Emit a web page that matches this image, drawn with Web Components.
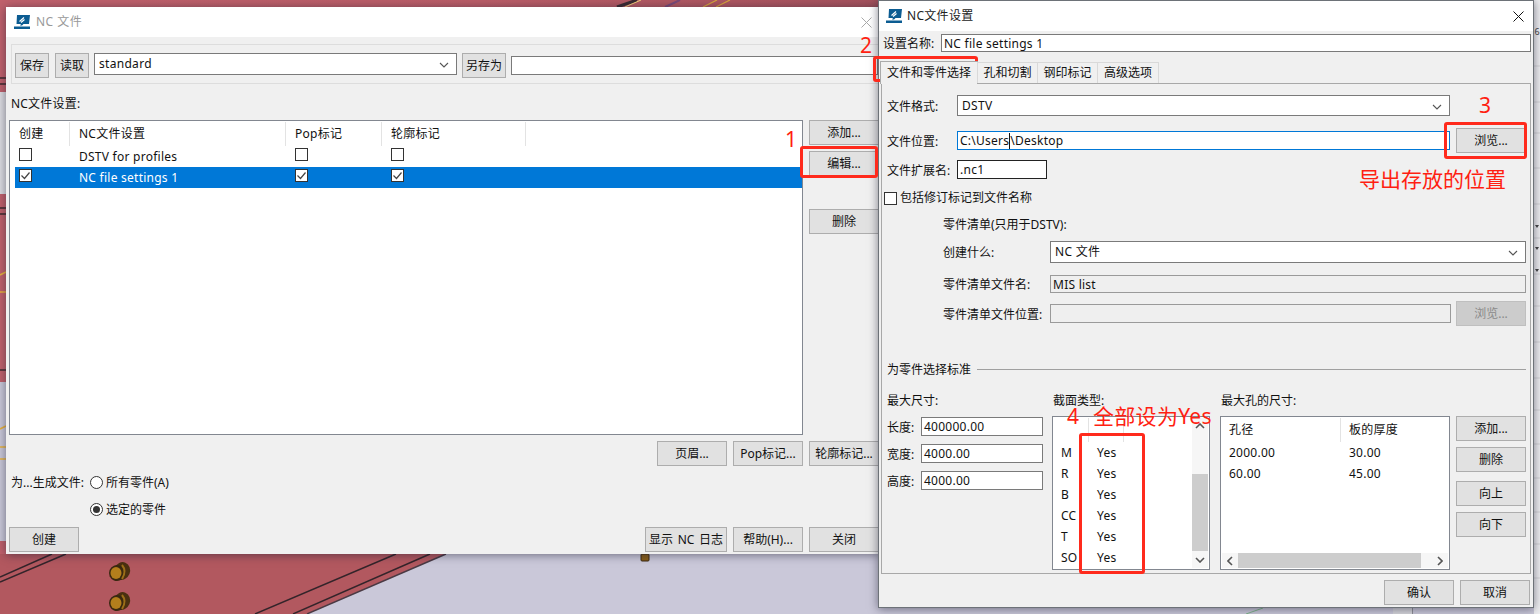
<!DOCTYPE html>
<html lang="zh">
<head>
<meta charset="utf-8">
<title>NC 文件</title>
<style>
    html, body { margin: 0; padding: 0; width: 1540px; height: 614px; overflow: hidden; }
    body { font: 12px/16px "Noto Sans", "Noto Sans CJK SC", sans-serif; color: #111; }
</style>
</head>
<body>
<nc-desktop>
    <nc-file-dialog></nc-file-dialog>
    <nc-settings-dialog></nc-settings-dialog>

    <!-- red marks drawn over the screenshot -->
    <nc-mark style="left:800px;top:146px;width:78px;height:32px"></nc-mark>
    <nc-mark style="left:873px;top:56px;width:105px;height:26px"></nc-mark>
    <nc-mark style="left:1444px;top:122px;width:83px;height:37px"></nc-mark>
    <nc-mark style="left:1079px;top:433px;width:66px;height:141px"></nc-mark>
    <nc-note style="left:785px;top:129px">1</nc-note>
    <nc-note style="left:860px;top:35px">2</nc-note>
    <nc-note style="left:1479px;top:95px">3</nc-note>
    <nc-note style="left:1067px;top:406px">4</nc-note>
    <nc-note style="left:1093px;top:406px;letter-spacing:.3px">全部设为Yes</nc-note>
    <nc-note style="left:1359px;top:169px">导出存放的位置</nc-note>
</nc-desktop>

<script>
// Nền: cảnh CAD phía sau hai cửa sổ
const desktopTemplate = document.createElement('template');
desktopTemplate.innerHTML = `<style>
    :host { display: block; position: relative; width: 1540px; height: 614px; overflow: hidden; background: #cac8d9; }
    svg { display: block; position: absolute; left: 0; top: 0; }
</style>
<svg width="1540" height="614" viewBox="0 0 1540 614">
    <defs>
        <linearGradient id="beam" x1="0" x2="1" y1="0" y2="0">
            <stop offset="0" stop-color="#c0616b"/>
            <stop offset="0.55" stop-color="#bb5d67"/>
            <stop offset="1" stop-color="#a5525c"/>
        </linearGradient>
        <g id="bolt">
            <ellipse cx="3" cy="-1" rx="8" ry="9" fill="#4a3010" transform="rotate(22 3 -1)"/>
            <ellipse cx="-2" cy="1" rx="8" ry="8" fill="#3a2810" transform="rotate(22 -2 1)"/>
            <ellipse cx="-3" cy="1" rx="5.5" ry="6" fill="#b37e1c"/>
            <path d="M3-7q5 6 0 14" fill="none" stroke="#9c6e18" stroke-width="2"/>
        </g>
    </defs>
    <polygon points="0,0 880,0 880,300 307,614 0,614" fill="url(#beam)"/>
    <polygon points="0,554 446,554 307,614 0,614" fill="#b2585f"/>

    <!-- dải bên trái -->
    <rect x="0" y="92" width="6" height="102" fill="#dcdce0"/>
    <rect x="0" y="382" width="6" height="159" fill="#c9c8d8"/>
    <path d="M0 78h6M0 84h6M0 208h6M0 214h6M0 370h6" stroke="#3d2a2e" stroke-width="1.4"/>
    <path d="M0 275l6-3M0 292h6M0 429l6-3M0 447h6M0 459h6" stroke="#e8b23c" stroke-width="1.6"/>

    <!-- dải trên -->
    <path d="M617 7l20-7" stroke="#3a2a30" stroke-width="3"/>
    <path d="M625 7l16-7" stroke="#f1d27a" stroke-width="1"/>
    <path d="M665 7l15-7" stroke="#7a4a78" stroke-width="2"/>
    <path d="M703 7l14-7M716 7l14-7" stroke="#d9a63a" stroke-width="1.2"/>

    <!-- phía dưới -->
    <path d="M0 577l52-23M0 582l66-28M255 614l141-60M293 614l137-60" stroke="#33242a" stroke-width="1.4" fill="none"/>
    <path d="M307 614l139-60" stroke="#4a3a44" stroke-width="1.4" fill="none"/>
    <use href="#bolt" x="119" y="572"/>
    <use href="#bolt" x="119" y="602"/>
    <rect x="641" y="554" width="8" height="7" rx="1" fill="#8a5f18" stroke="#3a2810"/>
    <path d="M1246 614l17-6" stroke="#7fb58a" stroke-width="1"/>
    <rect x="1393" y="608" width="19" height="6" fill="#d5d5da"/>
    <rect x="1412" y="608" width="1" height="6" fill="#8e8e96"/>

    <!-- cửa sổ bên phải -->
    <rect x="1534" y="0" width="6" height="614" fill="#eeeef0"/>
    <path d="M1534 66h6M1534 102h6M1534 133h6M1534 168h6M1534 204h6M1534 238h6M1534 274h6M1534 306h6M1534 342h6M1534 378h6M1534 410h6M1534 444h6M1534 478h6M1534 512h6M1534 544h6M1534 578h6" stroke="#d2d2d6"/>
    <path d="M1535 225h4l-2 3zM1535 247h4l-2 3zM1535 269h4l-2 3z" fill="#444"/>
    <text x="1534.5" y="35" font-size="9" fill="#444" font-family="Noto Sans">6</text>
</svg>
<slot></slot>`;
class NcDesktop extends HTMLElement {
    constructor() {
        super();
        this.attachShadow({ mode: 'open' });
        this.shadowRoot.appendChild(desktopTemplate.content.cloneNode(true));
    }
}

// Cửa sổ: thanh tiêu đề + nội dung
const windowTemplate = document.createElement('template');
windowTemplate.innerHTML = `<style>
    :host { display: flex; flex-direction: column; box-sizing: border-box; background: #f0f0f0; box-shadow: 0 1px 9px rgba(30,30,50,.55); }
    header { flex: none; height: 30px; background: #fff; display: flex; align-items: center; color: #222; letter-spacing: .3px; }
    :host([inactive]) header { color: #999; }
    .icon { margin: 0 5px 0 var(--icon-left, 8px); flex: none; }
    .title { flex: 1; }
    :host([inactive]) .title { margin-left: 1px; letter-spacing: .5px; }
    .close { margin-right: var(--close-right, 10px); flex: none; stroke: #111; }
    :host([inactive]) .close { stroke: #a8a8a8; }
    main { flex: 1; min-height: 0; }
</style>
<header>
    <svg class="icon" width="16" height="14" viewBox="0 0 16 14">
        <path d="M3 0h13l-1 9H9.5L8 10.5H6L7 9H2.5z" fill="#0b5c92"/>
        <path d="M5.5 6.5L10 2.5M7 7.5l3.5-3" stroke="#fff" stroke-width="1.2" fill="none"/>
        <rect x="0" y="11.5" width="16" height="2.5" fill="#0b5c92"/>
    </svg>
    <span class="title"></span>
    <svg class="close" width="11" height="11" viewBox="0 0 11 11"><path d="M.5.5l10 10M10.5.5l-10 10" fill="none"/></svg>
</header>
<main><slot></slot></main>`;
class NcWindow extends HTMLElement {
    constructor() {
        super();
        this.attachShadow({ mode: 'open' });
        this.shadowRoot.appendChild(windowTemplate.content.cloneNode(true));
    }
    connectedCallback() {
        this.shadowRoot.querySelector('.title').textContent = this.getAttribute('heading');
    }
}

const buttonTemplate = document.createElement('template');
buttonTemplate.innerHTML = `<style>
    :host { display: flex; align-items: center; justify-content: center; box-sizing: border-box; flex: none; width: 70px; height: 25px;
        background: #e1e1e1; border: 1px solid #adadad; color: #111; white-space: nowrap; }
    :host([disabled]) { background: #cccccc; border-color: #bfbfbf; color: #8a8a8a; }
</style><slot></slot>`;
class NcButton extends HTMLElement {
    constructor() {
        super();
        this.attachShadow({ mode: 'open' });
        this.shadowRoot.appendChild(buttonTemplate.content.cloneNode(true));
    }
}

const comboTemplate = document.createElement('template');
comboTemplate.innerHTML = `<style>
    :host { display: flex; align-items: center; box-sizing: border-box; flex: none; height: 22px; background: #fff; border: 1px solid #7a7a7a; padding: 0 7px 1px 4px; }
    span { flex: 1; letter-spacing: .3px; }
    svg { flex: none; margin-top: 2px; }
</style><span><slot></slot></span>
<svg width="10" height="6" viewBox="0 0 10 6"><path d="M1 1l4 4 4-4" fill="none" stroke="#555" stroke-width="1.1"/></svg>`;
class NcCombo extends HTMLElement {
    constructor() {
        super();
        this.attachShadow({ mode: 'open' });
        this.shadowRoot.appendChild(comboTemplate.content.cloneNode(true));
    }
}

const fieldTemplate = document.createElement('template');
fieldTemplate.innerHTML = `<style>
    :host { display: flex; align-items: center; box-sizing: border-box; flex: none; height: 19px; background: #fff; border: 1px solid #7a7a7a; padding: 1px 2px 0; white-space: nowrap; overflow: hidden; letter-spacing: .25px; }
    :host([focus]) { border-color: #0078d7; }
    :host([dark]) { border-color: #222; }
    :host([disabled]) { background: #efefef; border-color: #9a9a9a; }
    i { display: inline-block; width: 0; height: 16px; border-left: 1px solid #111; vertical-align: middle; }
</style><span></span>`;
class NcField extends HTMLElement {
    constructor() {
        super();
        this.attachShadow({ mode: 'open' });
        this.shadowRoot.appendChild(fieldTemplate.content.cloneNode(true));
    }
    connectedCallback() {
        const value = this.getAttribute('value') || '';
        const span = this.shadowRoot.querySelector('span');
        if (this.hasAttribute('caret')) {
            const at = +this.getAttribute('caret');
            span.append(value.slice(0, at), document.createElement('i'), value.slice(at));
        } else {
            span.textContent = value;
        }
    }
}

const checkTemplate = document.createElement('template');
checkTemplate.innerHTML = `<style>
    :host { display: inline-flex; align-items: center; gap: 3px; white-space: nowrap; }
    svg { flex: none; display: block; }
</style>
<svg width="13" height="13" viewBox="0 0 13 13">
    <rect x=".5" y=".5" width="12" height="12" fill="#fff" stroke="#333"/>
    <path class="tick" d="M2.5 6.5l3 3 5-6" fill="none" stroke="#444" stroke-width="1.2"/>
</svg><slot></slot>`;
class NcCheck extends HTMLElement {
    constructor() {
        super();
        this.attachShadow({ mode: 'open' });
        this.shadowRoot.appendChild(checkTemplate.content.cloneNode(true));
    }
    connectedCallback() {
        if (!this.hasAttribute('checked')) this.shadowRoot.querySelector('.tick').remove();
    }
}

const radioTemplate = document.createElement('template');
radioTemplate.innerHTML = `<style>
    :host { display: inline-flex; align-items: center; gap: 3px; white-space: nowrap; }
    svg { flex: none; display: block; }
</style>
<svg width="13" height="13" viewBox="0 0 13 13">
    <circle cx="6.5" cy="6.5" r="6" fill="#fff" stroke="#333"/>
    <circle class="dot" cx="6.5" cy="6.5" r="3.5" fill="#333"/>
</svg><slot></slot>`;
class NcRadio extends HTMLElement {
    constructor() {
        super();
        this.attachShadow({ mode: 'open' });
        this.shadowRoot.appendChild(radioTemplate.content.cloneNode(true));
    }
    connectedCallback() {
        if (!this.hasAttribute('checked')) this.shadowRoot.querySelector('.dot').remove();
    }
}

// Thanh cuộn: orient="v" hoặc "h", thumb="đầu,dài"
const scrollTemplate = document.createElement('template');
scrollTemplate.innerHTML = `<style>
    :host { display: block; position: relative; flex: none; background: #f6f6f6; }
    :host([orient="v"]) { width: 16px; }
    :host([orient="h"]) { height: 15px; }
    .thumb { position: absolute; background: #cdcdcd; }
    svg { position: absolute; }
</style><div class="thumb"></div>`;
class NcScroll extends HTMLElement {
    constructor() {
        super();
        this.attachShadow({ mode: 'open' });
        this.shadowRoot.appendChild(scrollTemplate.content.cloneNode(true));
    }
    connectedCallback() {
        const [start, length] = this.getAttribute('thumb').split(',');
        const thumb = this.shadowRoot.querySelector('.thumb');
        const vertical = this.getAttribute('orient') === 'v';
        const paths = vertical ? ['M1 5l4-4 4 4', 'M1 1l4 4 4-4'] : ['M5 1L1 5l4 4', 'M1 1l4 4-4 4'];
        if (vertical) {
            thumb.style.cssText = `left:0;right:0;top:${start}px;height:${length}px`;
        } else {
            thumb.style.cssText = `top:0;bottom:0;left:${start}px;width:${length}px`;
        }
        paths.forEach((d, i) => {
            const holder = document.createElement('template');
            holder.innerHTML = `<svg width="${vertical ? 10 : 6}" height="${vertical ? 6 : 10}" viewBox="0 0 ${vertical ? 10 : 6} ${vertical ? 6 : 10}"><path d="${d}" fill="none" stroke="#555" stroke-width="1.6"/></svg>`;
            const svg = holder.content.firstChild;
            if (vertical) {
                svg.style.left = '3px';
                svg.style[i ? 'bottom' : 'top'] = '5px';
            } else {
                svg.style.top = '3px';
                svg.style[i ? 'right' : 'left'] = '5px';
            }
            this.shadowRoot.appendChild(svg);
        });
    }
}

// Bảng: cột, tiêu đề, dòng lấy từ thuộc tính JSON. "[x]" và "[ ]" là ô chọn
const tableTemplate = document.createElement('template');
tableTemplate.innerHTML = `<style>
    :host { display: block; flex: 1; min-width: 0; min-height: 0; overflow: hidden; white-space: nowrap; letter-spacing: .25px; }
    .row { display: grid; height: 21px; align-items: center; }
    .head { margin-top: 1px; height: 24px; align-items: stretch; }
    .head span { display: flex; align-items: center; border-right: 1px solid #e3e3e3; box-sizing: border-box; height: 24px; }
    .head span:last-child { border-right: 0; }
    span { padding-left: var(--cell-pad, 9px); overflow: hidden; }
    .selected { background: #0078d7; color: #fff; margin-left: 5px; }
    .selected span:first-child { margin-left: -5px; }
</style>`;
class NcTable extends HTMLElement {
    constructor() {
        super();
        this.attachShadow({ mode: 'open' });
        this.shadowRoot.appendChild(tableTemplate.content.cloneNode(true));
    }
    connectedCallback() {
        const columns = JSON.parse(this.getAttribute('columns')).map(w => w + 'px').join(' ');
        const head = JSON.parse(this.getAttribute('head'));
        const rows = JSON.parse(this.getAttribute('rows'));
        const selected = +(this.getAttribute('selected') || -1);
        const addRow = (cells, name) => {
            const row = document.createElement('div');
            row.className = name;
            row.style.gridTemplateColumns = columns;
            if (name.includes('selected')) row.style.gridTemplateColumns = columns.replace(/^\d+/, n => n - 5);
            for (var i = 0; i < cells.length; i++) {
                const cell = document.createElement('span');
                if (cells[i] === '[x]' || cells[i] === '[ ]') {
                    const box = document.createElement('nc-check');
                    if (cells[i] === '[x]') box.setAttribute('checked', '');
                    cell.appendChild(box);
                } else {
                    cell.textContent = cells[i];
                }
                row.appendChild(cell);
            }
            this.shadowRoot.appendChild(row);
        };
        addRow(head, 'row head');
        rows.forEach((cells, i) => addRow(cells, i === selected ? 'row selected' : 'row'));
    }
}

const listBoxTemplate = document.createElement('template');
listBoxTemplate.innerHTML = `<style>
    :host { display: flex; box-sizing: border-box; background: #fff; border: 1px solid #828790; }
    :host([stack]) { flex-direction: column; }
    ::slotted(nc-scroll) { margin: 1px; }
</style><slot></slot>`;
class NcListBox extends HTMLElement {
    constructor() {
        super();
        this.attachShadow({ mode: 'open' });
        this.shadowRoot.appendChild(listBoxTemplate.content.cloneNode(true));
    }
}

const markTemplate = document.createElement('template');
markTemplate.innerHTML = `<style>
    :host { display: block; position: absolute; box-sizing: border-box; border: 3px solid #ff2a1c; border-radius: 3px; pointer-events: none; }
</style>`;
class NcMark extends HTMLElement {
    constructor() {
        super();
        this.attachShadow({ mode: 'open' });
        this.shadowRoot.appendChild(markTemplate.content.cloneNode(true));
    }
}

const noteTemplate = document.createElement('template');
noteTemplate.innerHTML = `<style>
    :host { display: block; position: absolute; color: #ff1f12; font-size: 21px; line-height: 20px; white-space: nowrap; font-weight: 400; }
</style><slot></slot>`;
class NcNote extends HTMLElement {
    constructor() {
        super();
        this.attachShadow({ mode: 'open' });
        this.shadowRoot.appendChild(noteTemplate.content.cloneNode(true));
    }
}

// Cửa sổ "NC 文件"
const fileDialogTemplate = document.createElement('template');
fileDialogTemplate.innerHTML = `<style>
    :host { display: block; position: absolute; left: 6px; top: 7px; width: 874px; height: 547px; }
    nc-window { height: 100%; --icon-left: 8px; --close-right: 8px; }
    .content { display: flex; flex-direction: column; padding: 0 1px 0 3px; }
    .toolbar { margin: 7px 0 0 2px; height: 40px; box-sizing: border-box; border: 1px solid #ddd; padding: 8px 0 0 3px; display: flex; align-items: flex-start; }
    .toolbar nc-combo { width: 363px; margin: 0 5px; }
    .toolbar nc-field { margin: 3px 0 0 5px; flex: 1; }
    .caption { margin: 12px 0 0 2px; height: 16px; letter-spacing: .2px; }
    .main { margin-top: 8px; display: flex; gap: 6px; }
    .table { width: 794px; height: 315px; }
    .side { display: flex; flex-direction: column; }
    .under { margin-top: 6px; display: flex; justify-content: flex-end; gap: 6px; }
    .target { margin: 10px 0 0 2px; display: grid; grid-template-columns: 79px auto; grid-auto-rows: 27px; justify-content: start; align-items: start; }
    .target span { height: 13px; line-height: 13px; }
    .bottom { margin-top: -3px; display: flex; gap: 6px; }
    .bottom .first { margin-right: auto; }
</style>
<nc-window heading="NC 文件" inactive>
    <div class="content">
        <div class="toolbar">
            <nc-button style="width:34px">保存</nc-button>
            <nc-button style="width:34px;margin-left:6px">读取</nc-button>
            <nc-combo>standard</nc-combo>
            <nc-button style="width:44px">另存为</nc-button>
            <nc-field></nc-field>
        </div>
        <div class="caption">NC文件设置:</div>
        <div class="main">
            <nc-list-box class="table">
                <nc-table columns="[60,216,96,144,276]" selected="1"
                    head='["创建","NC文件设置","Pop标记","轮廓标记",""]'
                    rows='[["[ ]","DSTV for profiles","[ ]","[ ]",""],["[x]","NC file settings 1","[x]","[x]",""]]'></nc-table>
            </nc-list-box>
            <div class="side">
                <nc-button>添加...</nc-button>
                <nc-button style="margin-top:6px">编辑...</nc-button>
                <nc-button style="margin-top:33px">删除</nc-button>
            </div>
        </div>
        <div class="under">
            <nc-button>页眉...</nc-button>
            <nc-button>Pop标记...</nc-button>
            <nc-button>轮廓标记...</nc-button>
        </div>
        <div class="target">
            <span>为...生成文件:</span><nc-radio><span>所有零件(A)</span></nc-radio>
            <span></span><nc-radio checked><span>选定的零件</span></nc-radio>
        </div>
        <div class="bottom">
            <nc-button class="first">创建</nc-button>
            <nc-button style="width:82px;word-spacing:1.5px">显示 NC 日志</nc-button>
            <nc-button>帮助(H)...</nc-button>
            <nc-button>关闭</nc-button>
        </div>
    </div>
</nc-window>`;
class NcFileDialog extends HTMLElement {
    constructor() {
        super();
        this.attachShadow({ mode: 'open' });
        this.shadowRoot.appendChild(fileDialogTemplate.content.cloneNode(true));
    }
}

// Cửa sổ "NC文件设置"
const settingsDialogTemplate = document.createElement('template');
settingsDialogTemplate.innerHTML = `<style>
    :host { display: block; position: absolute; left: 878px; top: 0; width: 656px; height: 608px; }
    nc-window { height: 100%; border: 1px solid #6d7278; --icon-left: 7px; --close-right: 9px; }
    .content { display: flex; flex-direction: column; }
    .name { margin: 3px 2px 0 4px; display: flex; align-items: center; height: 18px; }
    .name span { width: 58px; flex: none; padding-top: 2px; }
    .name nc-field { flex: 1; height: 18px; margin-right: 0; }
    .tabs { margin: 9px 0 0 1px; display: flex; height: 22px; align-items: flex-end; position: relative; z-index: 1; }
    .tab { height: 21px; box-sizing: border-box; border: 1px solid #d9d9d9; border-bottom: 0; display: flex; align-items: center; justify-content: center; margin-left: -1px; }
    .tab.active { height: 23px; width: 98px; margin: 0 0 -1px; background: #f0f0f0; border-color: #aaa; }
    .panel { margin: 0 2px; height: 491px; box-sizing: border-box; border: 1px solid #a8a8a8; padding: 11px 4px 0 5px; }
    .row { display: flex; align-items: center; }
    .row > span { flex: none; padding-top: 2px; }
    .l70 { width: 70px; }
    .l107 { width: 107px; }
    .check { margin: 11px 0 0 -3px; height: 13px; }
    .sub { margin-left: 56px; }
    .list-title { margin-top: 13px; height: 16px; padding-top: 1px; box-sizing: border-box; }
    .group { margin-top: 35px; height: 16px; display: flex; align-items: center; gap: 6px; }
    .group span { padding-top: 2px; }
    .group::after { content: ""; flex: 1; height: 1px; background: #a0a0a0; }
    .criteria { margin-top: 15px; display: grid; grid-template-columns: 165px 168px 236px 70px; grid-template-rows: 16px 154px; row-gap: 8px; }
    .criteria > div:nth-child(-n+3) { padding-top: 1px; }
    .criteria > :nth-child(2) { margin-left: 1px; }
    .criteria > :nth-child(3) { margin-left: 1px; }
    .criteria nc-list-box.section { width: 158px; }
    .criteria nc-list-box.holes { width: 230px; }
    .sizes { display: grid; grid-template-columns: 34px 122px; grid-auto-rows: 19px; row-gap: 8px; padding-top: 1px; align-items: center; }
    .sizes span { padding-top: 2px; }
    .sizes nc-field { width: 122px; }
    .actions { display: flex; flex-direction: column; }
    .foot { margin: 6px 3px 0 0; display: flex; justify-content: flex-end; gap: 6px; }
</style>
<nc-window heading="NC文件设置">
    <div class="content">
        <div class="name"><span>设置名称:</span><nc-field value="NC file settings 1"></nc-field></div>
        <div class="tabs">
            <div class="tab active">文件和零件选择</div>
            <div class="tab" style="width:61px">孔和切割</div>
            <div class="tab" style="width:61px">钢印标记</div>
            <div class="tab" style="width:62px">高级选项</div>
        </div>
        <div class="panel">
            <div class="row"><span class="l70">文件格式:</span><nc-combo style="width:493px;height:21px;padding-bottom:0">DSTV</nc-combo></div>
            <div class="row" style="margin-top:12px">
                <span class="l70">文件位置:</span>
                <nc-field focus value="C:\\Users\\Desktop" caret="8" style="width:493px"></nc-field>
                <nc-button style="margin-left:6px">浏览...</nc-button>
            </div>
            <div class="row" style="margin-top:7px"><span class="l70">文件扩展名:</span><nc-field dark value=".nc1" style="width:90px"></nc-field></div>
            <div class="check"><nc-check>包括修订标记到文件名称</nc-check></div>
            <div class="sub">
                <div class="list-title">零件清单(只用于DSTV):</div>
                <div class="row" style="margin-top:9px"><span class="l107">创建什么:</span><nc-combo style="width:476px">NC 文件</nc-combo></div>
                <div class="row" style="margin-top:12px"><span class="l107">零件清单文件名:</span><nc-field disabled value="MIS list" style="width:476px;height:18px"></nc-field></div>
                <div class="row" style="margin-top:8px">
                    <span class="l107">零件清单文件位置:</span>
                    <nc-field disabled style="width:401px"></nc-field>
                    <nc-button disabled style="margin-left:5px">浏览...</nc-button>
                </div>
            </div>
            <div class="group"><span>为零件选择标准</span></div>
            <div class="criteria">
                <div>最大尺寸:</div>
                <div>截面类型:</div>
                <div>最大孔的尺寸:</div>
                <div></div>
                <div class="sizes">
                    <span>长度:</span><nc-field value="400000.00"></nc-field>
                    <span>宽度:</span><nc-field value="4000.00"></nc-field>
                    <span>高度:</span><nc-field value="4000.00"></nc-field>
                </div>
                <nc-list-box class="section">
                    <nc-table style="--cell-pad:8px" columns="[36,35,68]"
                        head='["","",""]'
                        rows='[["M","Yes",""],["R","Yes",""],["B","Yes",""],["CC","Yes",""],["T","Yes",""],["SO","Yes",""]]'></nc-table>
                    <nc-scroll orient="v" thumb="56,77"></nc-scroll>
                </nc-list-box>
                <nc-list-box class="holes" stack>
                    <nc-table style="--cell-pad:8px" columns="[120,108]" head='["孔径","板的厚度"]'
                        rows='[["2000.00","30.00"],["60.00","45.00"]]'></nc-table>
                    <nc-scroll orient="h" thumb="16,183"></nc-scroll>
                </nc-list-box>
                <div class="actions">
                    <nc-button>添加...</nc-button>
                    <nc-button style="margin-top:6px">删除</nc-button>
                    <nc-button style="margin-top:9px">向上</nc-button>
                    <nc-button style="margin-top:6px">向下</nc-button>
                </div>
            </div>
        </div>
        <div class="foot">
            <nc-button>确认</nc-button>
            <nc-button>取消</nc-button>
        </div>
    </div>
</nc-window>`;
class NcSettingsDialog extends HTMLElement {
    constructor() {
        super();
        this.attachShadow({ mode: 'open' });
        this.shadowRoot.appendChild(settingsDialogTemplate.content.cloneNode(true));
    }
}

window.customElements.define('nc-desktop', NcDesktop);
window.customElements.define('nc-window', NcWindow);
window.customElements.define('nc-button', NcButton);
window.customElements.define('nc-combo', NcCombo);
window.customElements.define('nc-field', NcField);
window.customElements.define('nc-check', NcCheck);
window.customElements.define('nc-radio', NcRadio);
window.customElements.define('nc-scroll', NcScroll);
window.customElements.define('nc-table', NcTable);
window.customElements.define('nc-list-box', NcListBox);
window.customElements.define('nc-mark', NcMark);
window.customElements.define('nc-note', NcNote);
window.customElements.define('nc-file-dialog', NcFileDialog);
window.customElements.define('nc-settings-dialog', NcSettingsDialog);
</script>
</body>
</html>
